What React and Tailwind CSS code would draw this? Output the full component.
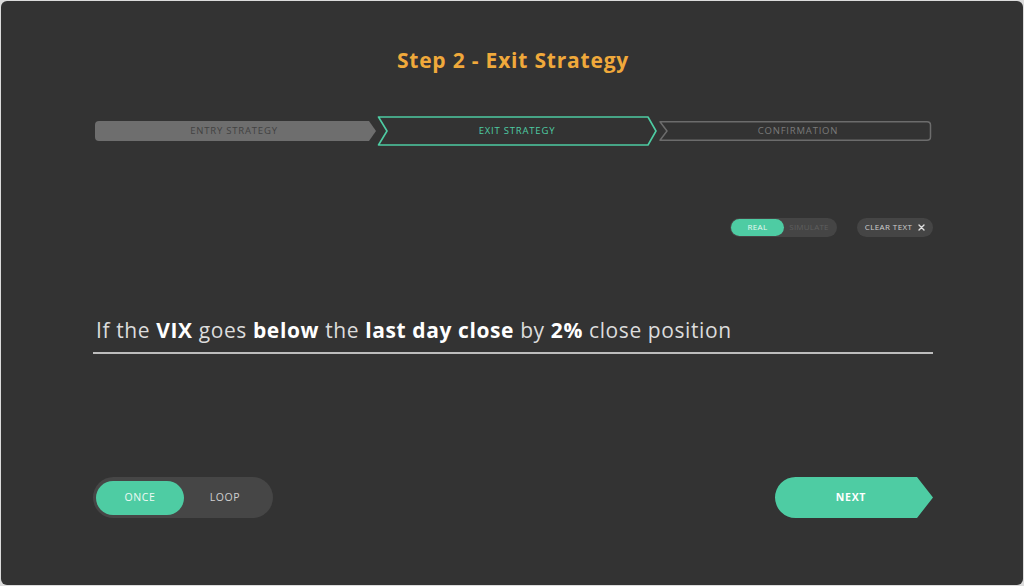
import React from "react";

const font = { fontFamily: '"Open Sans", "Liberation Sans", sans-serif' };

function Entry() {
  return (
    <div className="relative h-[20px] w-[283px] flex items-center justify-center">
      <svg className="absolute inset-0" width="283" height="20" viewBox="0 0 283 20">
        <path d="M4 0 H274 L281 10 L274 20 H4 Q0 20 0 16 V4 Q0 0 4 0 Z" fill="#6e6e6e" />
      </svg>
      <span className="relative text-[9.5px] tracking-[0.8px] text-[#424242] pr-[4px]">ENTRY STRATEGY</span>
    </div>
  );
}

function Exit() {
  return (
    <div className="relative h-[30px] w-[281px] flex items-center justify-center">
      <svg className="absolute inset-0" width="281" height="30" viewBox="0 0 281 30">
        <path d="M1.5 1 H271 L279 15 L271 29 H1.5 L10 15 Z" fill="none" stroke="#4ecca3" strokeWidth="1.6" strokeLinejoin="round" />
      </svg>
      <span className="relative text-[9.5px] tracking-[0.8px] text-[#4ecca3]">EXIT STRATEGY</span>
    </div>
  );
}

function Confirm() {
  return (
    <div className="relative h-[20px] w-[273px] flex items-center justify-center">
      <svg className="absolute inset-0" width="273" height="20" viewBox="0 0 273 20">
        <path d="M1 0.75 H268 Q271.5 0.75 271.5 4 V16 Q271.5 19.25 268 19.25 H1 L8 10 Z" fill="none" stroke="#6c6c6c" strokeWidth="1.5" strokeLinejoin="round" />
      </svg>
      <span className="relative text-[9.5px] tracking-[0.8px] text-[#7a7a7a] pl-[6px]">CONFIRMATION</span>
    </div>
  );
}

export default function App() {
  return (
    <div className="h-screen w-full bg-[#dcdcdc] p-px" style={font}>
      <div className="h-full w-full rounded-[6px] bg-[#333333] flex flex-col pl-[92px] pr-[90px]">
        <h1 className="pt-[45px] text-center text-[21px] leading-[28px] font-bold tracking-[0.8px] text-[#f0a93b]">
          Step 2 - Exit Strategy
        </h1>

        <div className="mt-[42px] h-[30px] flex items-center pl-[2px] pr-[2px]">
          <Entry />
          <Exit />
          <div className="w-[2px]" />
          <Confirm />
        </div>

        <div className="mt-[71px] h-[20px] flex items-center justify-end gap-[20px]">
          <div className="flex items-center h-[19px] w-[107px] rounded-full bg-[#454545] p-[1px]">
            <div className="h-[17px] w-[53px] rounded-full bg-[#4ecca3] flex items-center justify-center text-[8px] tracking-[0.3px] text-[#e8f8f1]">REAL</div>
            <div className="flex-1 text-center text-[8px] tracking-[0.2px] text-[#5e5e5e] pr-[2px]">SIMULATE</div>
          </div>
          <div className="flex items-center gap-[6px] h-[19px] w-[76px] rounded-full bg-[#454545] justify-center">
            <span className="text-[8px] tracking-[0.4px] text-[#cfcfcf]">CLEAR TEXT</span>
            <svg width="7" height="7" viewBox="0 0 7 7">
              <path d="M1 1 L6 6 M6 1 L1 6" stroke="#e0e0e0" strokeWidth="1.4" strokeLinecap="round" />
            </svg>
          </div>
        </div>

        <div className="mt-[78px] border-b-2 border-[#bdbdbd] pb-[7px] pl-[3px]">
          <p className="text-[21px] leading-[30px] text-[#dcdcdc] tracking-[0.6px]">
            If the <b className="text-white">VIX</b> goes <b className="text-white">below</b> the{" "}
            <b className="text-white">last day close</b> by <b className="text-white">2%</b> close position
          </p>
        </div>

        <div className="mt-[123px] flex items-center justify-between">
          <div className="flex items-center h-[41px] w-[180px] rounded-full bg-[#464646] px-[3px]">
            <div className="h-[34px] w-[88px] rounded-full bg-[#4ecca3] flex items-center justify-center text-[10.5px] tracking-[0.6px] text-[#eefaf5]">ONCE</div>
            <div className="flex-1 text-center text-[10.5px] tracking-[0.6px] text-[#d0d0d0] pr-[4px]">LOOP</div>
          </div>
          <div className="relative h-[41px] w-[158px] flex items-center justify-center">
            <svg className="absolute inset-0" width="158" height="41" viewBox="0 0 158 41">
              <path d="M20.5 0 H142 L158 20.5 L142 41 H20.5 A20.5 20.5 0 0 1 20.5 0 Z" fill="#4ecca3" />
            </svg>
            <span className="relative text-[10.5px] font-bold tracking-[0.7px] text-white pr-[6px]">NEXT</span>
          </div>
        </div>
      </div>
    </div>
  );
}
